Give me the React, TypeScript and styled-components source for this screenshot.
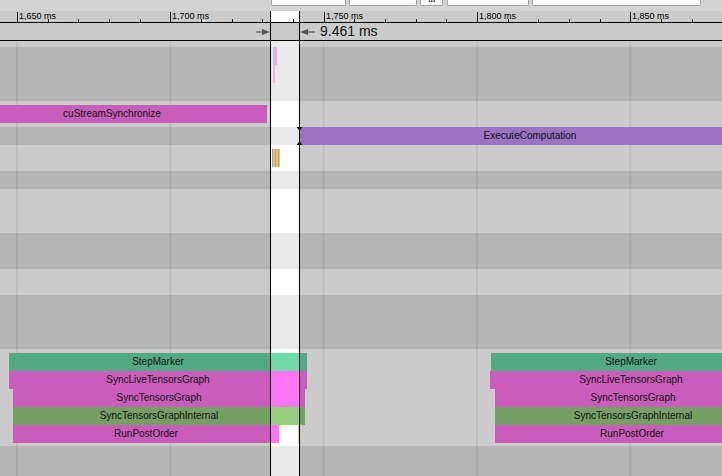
import styled, { createGlobalStyle } from "styled-components";

// timeline scale: 1,650 ms sits at x=17, 1,850 ms at x=630
const PX_PER_MS = 3.0665;
const ORIGIN_MS = 1650;
const ORIGIN_X = 17;
const msToX = (ms: number) => ORIGIN_X + (ms - ORIGIN_MS) * PX_PER_MS;

const SEL_LEFT = 270;
const SEL_RIGHT = 299;

const colors = {
  dark: "#b5b5b5",
  light: "#cbcbcb",
  selDark: "#e9e9e9",
  selLight: "#ffffff",
  pink: "#ca5dbc",
  pinkHi: "#ff77f8",
  teal: "#53a985",
  tealHi: "#6fdbad",
  olive: "#74a163",
  oliveHi: "#99d17f",
  purple: "#9c73c3",
};

type Tone = "dark" | "light";

type SliceData = {
  label?: string;
  left: number;
  width: number;
  top: number;
  color: string;
  hiColor?: string;
};

type TrackData = {
  tone: Tone;
  height?: number;
  selColor?: string;
  slices?: SliceData[];
  markers?: boolean;
};

const stack = (x: number[], w: number[]): SliceData[] => [
  { label: "StepMarker", left: x[0], width: w[0], top: 4, color: colors.teal, hiColor: colors.tealHi },
  { label: "SyncLiveTensorsGraph", left: x[1], width: w[1], top: 22, color: colors.pink, hiColor: colors.pinkHi },
  { label: "SyncTensorsGraph", left: x[2], width: w[2], top: 40, color: colors.pink, hiColor: colors.pinkHi },
  { label: "SyncTensorsGraphInternal", left: x[3], width: w[3], top: 58, color: colors.olive, hiColor: colors.oliveHi },
  { label: "RunPostOrder", left: x[4], width: w[4], top: 76, color: colors.pink, hiColor: colors.pinkHi },
];

const tracks: TrackData[] = [
  { tone: "light", height: 6, selColor: "#ebebeb" },
  {
    tone: "dark",
    height: 54,
    slices: [
      { left: 273, width: 2, top: 0, color: "#bcc3f2" },
      { left: 275, width: 1.5, top: 0, color: "#f2a7e2" },
      { left: 273, width: 2, top: 18, color: "#f7b3d9" },
    ],
  },
  {
    tone: "light",
    height: 26,
    slices: [{ label: "cuStreamSynchronize", left: -43, width: 310, top: 4, color: colors.pink }],
  },
  {
    tone: "dark",
    height: 18,
    markers: true,
    slices: [{ label: "ExecuteComputation", left: 299, width: 462, top: 0, color: colors.purple }],
  },
  { tone: "light", height: 26, slices: [{ left: 272, width: 8, top: 4, color: "gold" }] },
  { tone: "dark", height: 18 },
  { tone: "light", height: 44 },
  { tone: "dark", height: 36 },
  { tone: "light", height: 26 },
  { tone: "dark", height: 54 },
  {
    tone: "light",
    height: 97,
    slices: [
      ...stack([9, 9, 13, 13, 13], [298, 298, 292, 292, 266]),
      { left: 297.5, width: 1, top: 76, color: "#e4cda6" },
      ...stack([491, 490, 495, 495, 495], [280, 282, 276, 276, 274]),
    ],
  },
  { tone: "dark" },
];

const GlobalStyle = createGlobalStyle`
  html, body {
    margin: 0;
    padding: 0;
    background: ${colors.dark};
  }
  body {
    font-family: "Liberation Sans", Arial, sans-serif;
  }
`;

const Frame = styled.div`
  position: relative;
  width: 722px;
  height: 476px;
  overflow: hidden;
  display: flex;
  flex-direction: column;
  background: ${colors.light};
  font-family: "Liberation Sans", Arial, sans-serif;
`;

const Toolbar = styled.div`
  flex: none;
  height: 11px;
  display: flex;
  align-items: flex-start;
  padding-left: 271px;
  box-sizing: border-box;
  background: #d3d3d3;
`;

const ToolBox = styled.div<{ $w: number; $gap: number }>`
  width: ${(p) => p.$w}px;
  height: 6px;
  margin-right: ${(p) => p.$gap}px;
  box-sizing: border-box;
  background: #fff;
  border: 1px solid #a4a4a4;
  border-top: none;
  border-radius: 0 0 2px 2px;
  overflow: hidden;
  color: #333;
  font-size: 10px;
  font-weight: bold;
  line-height: 4px;
  text-align: center;
  letter-spacing: -1px;
`;

const Ruler = styled.div`
  position: relative;
  flex: none;
  height: 11px;
  border-bottom: 1px solid #000;
  background: ${colors.light};
`;

const RulerFill = styled.div`
  position: absolute;
  top: 0;
  bottom: 0;
  left: ${SEL_LEFT + 1}px;
  width: ${SEL_RIGHT - SEL_LEFT - 1}px;
  background: #fff;
`;

const Tick = styled.div<{ $major?: boolean }>`
  position: absolute;
  bottom: 0;
  width: 1px;
  height: ${(p) => (p.$major ? 10 : 3)}px;
  background: #1a1a1a;
`;

const TickLabel = styled.span`
  position: absolute;
  top: 0;
  font-size: 9px;
  line-height: 10px;
  color: #000;
  white-space: nowrap;
`;

const MeasureBar = styled.div`
  flex: none;
  height: 17px;
  border-bottom: 1px solid #000;
  display: flex;
  align-items: center;
  padding-left: 256px;
  background: ${colors.light};
`;

const ArrowSvg = styled.svg<{ $gap?: number }>`
  display: block;
  flex: none;
  margin-left: ${(p) => p.$gap || 0}px;
`;

const MeasureText = styled.span`
  margin-left: 5px;
  font-size: 14px;
  line-height: 17px;
  color: #111;
  white-space: nowrap;
`;

const TrackList = styled.div`
  flex: 1;
  display: flex;
  flex-direction: column;
`;

const Track = styled.div<{ $tone: Tone; $h?: number }>`
  position: relative;
  flex: ${(p) => (p.$h ? `0 0 ${p.$h}px` : "1 1 auto")};
  background-color: ${(p) => (p.$tone === "dark" ? colors.dark : colors.light)};
  background-image: linear-gradient(to right, rgba(0, 0, 0, 0.06) 0 2px, transparent 2px);
  background-size: ${50 * PX_PER_MS}px 100%;
  background-position: ${ORIGIN_X - 1}px 0;
  background-repeat: repeat-x;
`;

const SelFill = styled.div<{ $color: string }>`
  position: absolute;
  top: 0;
  bottom: 0;
  left: ${SEL_LEFT + 1}px;
  width: ${SEL_RIGHT - SEL_LEFT - 1}px;
  background: ${(p) => p.$color};
`;

const Slice = styled.div<{ $color: string }>`
  position: absolute;
  height: 18px;
  overflow: hidden;
  background: ${(p) =>
    p.$color === "gold"
      ? "repeating-linear-gradient(to right, #c6a56b 0 1px, #dcc08a 1px 3px)"
      : p.$color};
`;

const SliceHi = styled.div<{ $color: string }>`
  position: absolute;
  top: 0;
  bottom: 0;
  background: ${(p) => p.$color};
`;

const SliceLabel = styled.span`
  position: relative;
  display: block;
  font-size: 10px;
  line-height: 18px;
  color: #111;
  text-align: center;
  white-space: nowrap;
`;

const Markers = styled.svg`
  position: absolute;
  top: 0;
  left: ${SEL_RIGHT - 3}px;
`;

const SelEdge = styled.div<{ $x: number }>`
  position: absolute;
  top: 11px;
  bottom: 0;
  left: ${(p) => p.$x}px;
  width: 1px;
  background: #000;
`;

const majorTicks = [1650, 1700, 1750, 1800, 1850];
const minorTicks: number[] = [];
for (let ms = 1640; ms <= 1880; ms += 10) {
  if (ms % 50 !== 0) minorTicks.push(ms);
}

const renderSlice = (s: SliceData, i: number) => {
  const right = s.left + s.width;
  const hiStart = Math.max(s.left, SEL_LEFT);
  const hiEnd = Math.min(right, SEL_RIGHT);
  return (
    <Slice
      key={i}
      $color={s.color}
      style={{ left: s.left, width: s.width, top: s.top }}
    >
      {s.hiColor && hiEnd > hiStart && (
        <SliceHi
          $color={s.hiColor}
          style={{ left: hiStart - s.left, width: hiEnd - hiStart }}
        />
      )}
      {s.label && <SliceLabel>{s.label}</SliceLabel>}
    </Slice>
  );
};

export default function App() {
  return (
    <Frame>
      <GlobalStyle />
      <Toolbar>
        <ToolBox $w={75} $gap={3} />
        <ToolBox $w={68} $gap={3} />
        <ToolBox $w={23} $gap={4}>···</ToolBox>
        <ToolBox $w={82} $gap={3} />
        <ToolBox $w={169} $gap={0} />
      </Toolbar>

      <Ruler>
        <RulerFill />
        {minorTicks.map((ms) => (
          <Tick key={ms} style={{ left: Math.round(msToX(ms)) }} />
        ))}
        {majorTicks.map((ms) => (
          <Tick key={ms} $major style={{ left: Math.round(msToX(ms)) }} />
        ))}
        {majorTicks.map((ms) => (
          <TickLabel key={ms} style={{ left: Math.round(msToX(ms)) + 2 }}>
            {ms.toLocaleString("en-US")} ms
          </TickLabel>
        ))}
      </Ruler>

      <MeasureBar>
        <ArrowSvg width="14" height="8" viewBox="0 0 14 8">
          <line x1="0" y1="4" x2="8" y2="4" stroke="#555" strokeWidth="1.2" />
          <polygon points="6,1 14,4 6,7" fill="#555" />
        </ArrowSvg>
        <ArrowSvg $gap={30} width="15" height="8" viewBox="0 0 15 8">
          <polygon points="8,1 0,4 8,7" fill="#555" />
          <line x1="7" y1="4" x2="15" y2="4" stroke="#555" strokeWidth="1.2" />
        </ArrowSvg>
        <MeasureText>9.461 ms</MeasureText>
      </MeasureBar>

      <TrackList>
        {tracks.map((t, i) => (
          <Track key={i} $tone={t.tone} $h={t.height}>
            <SelFill
              $color={t.selColor || (t.tone === "dark" ? colors.selDark : colors.selLight)}
            />
            {t.slices?.map(renderSlice)}
            {t.markers && (
              <Markers width="7" height="18" viewBox="0 0 7 18">
                <polygon points="0.5,0 6.5,0 3.5,3.5" fill="#000" />
                <polygon points="0.5,18 6.5,18 3.5,14.5" fill="#000" />
              </Markers>
            )}
          </Track>
        ))}
      </TrackList>

      <SelEdge $x={SEL_LEFT} />
      <SelEdge $x={SEL_RIGHT} />
    </Frame>
  );
}
